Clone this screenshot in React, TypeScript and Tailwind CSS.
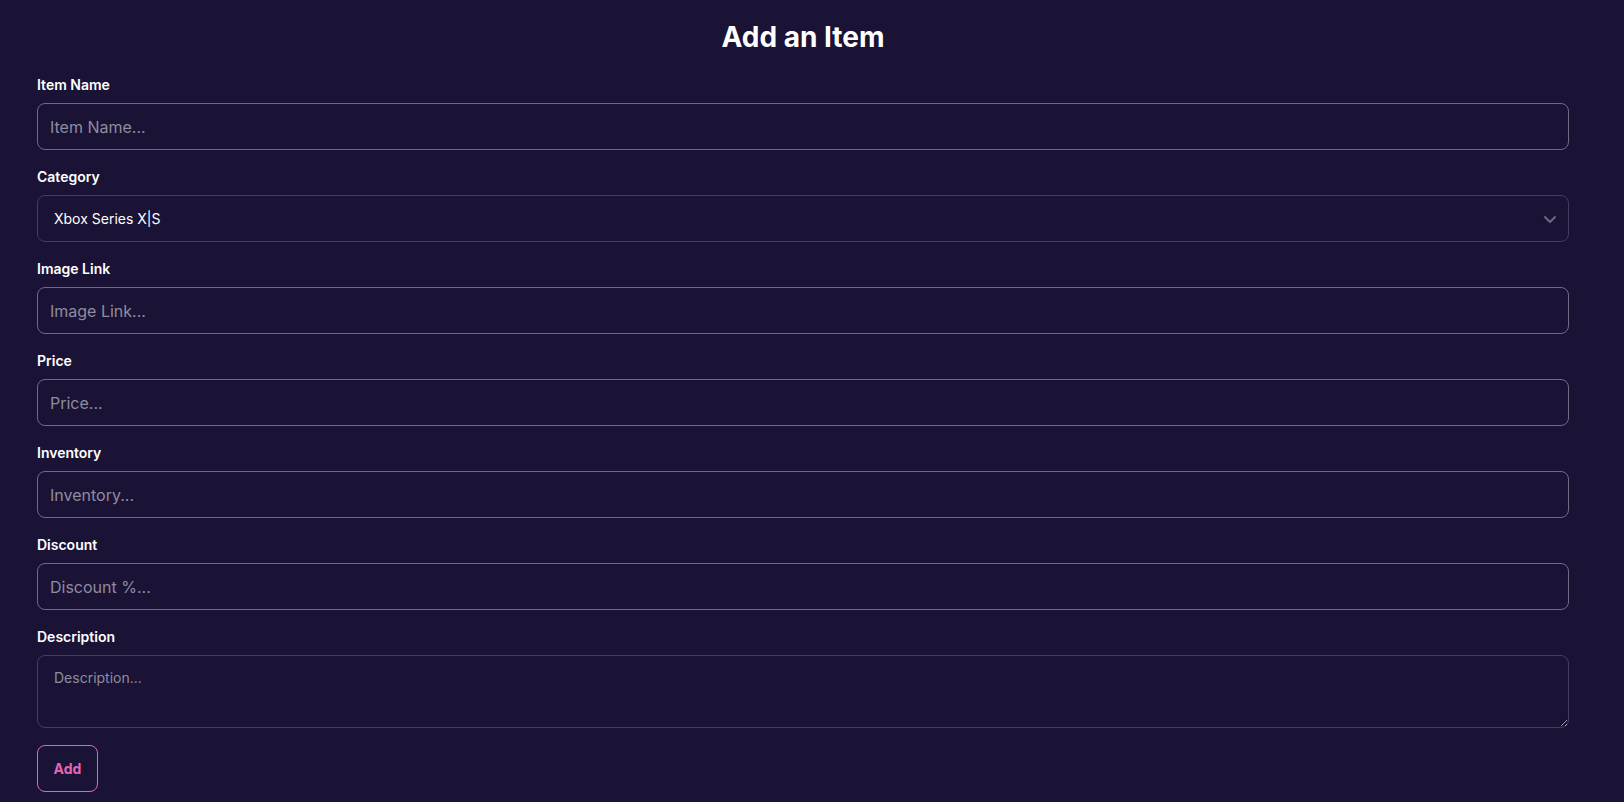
import React from "react";

const inputCls =
  "block w-full h-[47px] rounded-lg border border-[#6f6b83] bg-transparent px-3 text-base text-white placeholder:text-[#8f8c9f] outline-none";

function Field({ label, children }: { label: string; children: React.ReactNode }) {
  return (
    <div className="mb-[17px]">
      <label className="block mb-2 text-sm leading-5 font-semibold text-white">{label}</label>
      {children}
    </div>
  );
}

export default function App() {
  return (
    <div
      className="min-h-[802px] w-full bg-[#1a1335] pl-[37px] pr-[55px] pt-[19px]"
      style={{ fontFamily: "Inter, 'Noto Sans', sans-serif" }}
    >
      <h1 className="text-center text-[28px] leading-9 font-bold text-white mb-5">Add an Item</h1>
      <Field label="Item Name">
        <input className={inputCls} placeholder="Item Name..." />
      </Field>
      <Field label="Category">
        <div className="relative">
          <select
            defaultValue="xbox"
            className="block w-full h-[47px] appearance-none rounded-lg border border-[#433d5f] bg-transparent pl-4 pr-10 text-sm text-white outline-none"
          >
            <option value="xbox" className="bg-[#1a1335]">Xbox Series X|S</option>
          </select>
          <svg
            className="pointer-events-none absolute right-[12px] top-1/2 -translate-y-1/2"
            width="14"
            height="14"
            viewBox="0 0 14 14"
            fill="none"
          >
            <path d="M2 5l5 5 5-5" stroke="#6c6a80" strokeWidth="2" strokeLinecap="round" strokeLinejoin="round" />
          </svg>
        </div>
      </Field>
      <Field label="Image Link">
        <input className={inputCls} placeholder="Image Link..." />
      </Field>
      <Field label="Price">
        <input className={inputCls} placeholder="Price..." />
      </Field>
      <Field label="Inventory">
        <input className={inputCls} placeholder="Inventory..." />
      </Field>
      <Field label="Discount">
        <input className={inputCls} placeholder="Discount %..." />
      </Field>
      <Field label="Description">
        <textarea
          className="block w-full h-[73px] rounded-lg border border-[#433d5f] bg-transparent px-4 pt-3 text-sm leading-5 text-white placeholder:text-[#8f8c9f] outline-none"
          placeholder="Description..."
        />
      </Field>
      <button className="w-[61px] h-[47px] rounded-lg border border-[#e465b4] text-sm font-bold text-[#e465b4]">
        Add
      </button>
    </div>
  );
}
